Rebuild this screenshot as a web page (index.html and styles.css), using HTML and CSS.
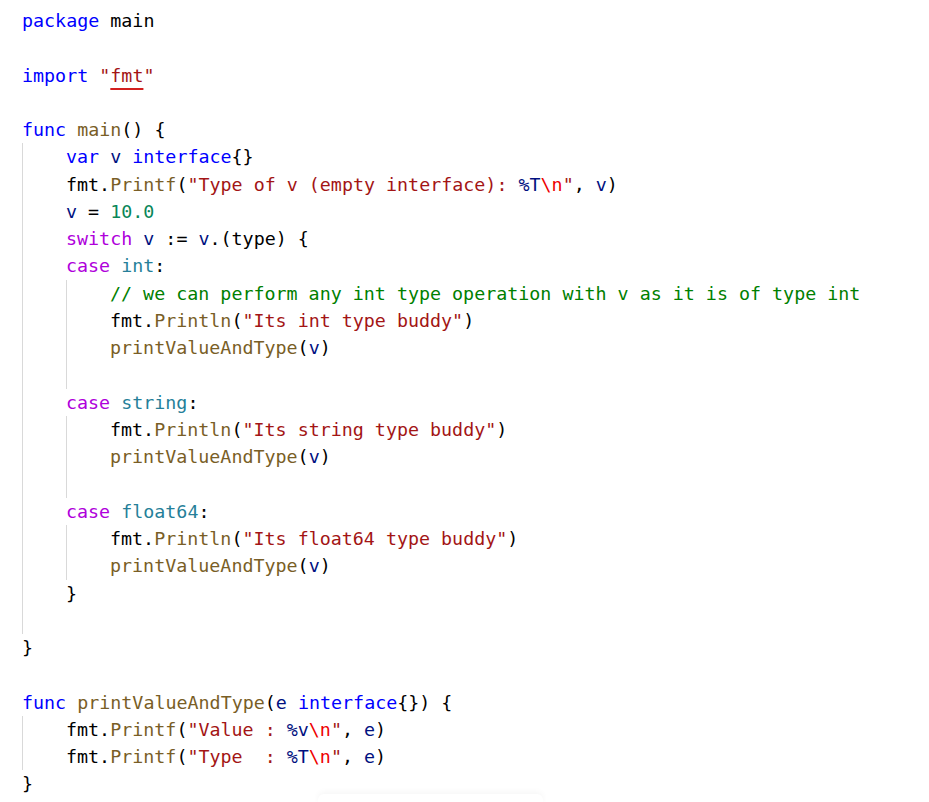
FILE: index.html
```html
<!DOCTYPE html>
<html>
<head>
<meta charset="utf-8">
<link rel="stylesheet" href="styles.css">
</head>
<body>
<div class="editor">
  <div class="ln"><span class="kw">package</span> main</div>
  <div class="ln"></div>
  <div class="ln"><span class="kw">import</span> <span class="str">"<span class="err">fmt</span>"</span></div>
  <div class="ln"></div>
  <div class="ln"><span class="kw">func</span> <span class="fn">main</span>() {</div>
  <div class="block">
    <div class="ln"><span class="kw">var</span> <span class="var">v</span> <span class="kw">interface</span>{}</div>
    <div class="ln"><span class="pkg">fmt</span>.<span class="fn">Printf</span>(<span class="str">"Type of v (empty interface): </span><span class="ph">%T</span><span class="esc">\n</span><span class="str">"</span>, <span class="var">v</span>)</div>
    <div class="ln"><span class="var">v</span> = <span class="num">10.0</span></div>
    <div class="ln"><span class="ctl">switch</span> <span class="var">v</span> := <span class="var">v</span>.(type) {</div>
    <div class="ln"><span class="ctl">case</span> <span class="ty">int</span>:</div>
    <div class="block">
      <div class="ln"><span class="cm">// we can perform any int type operation with v as it is of type int</span></div>
      <div class="ln"><span class="pkg">fmt</span>.<span class="fn">Println</span>(<span class="str">"Its int type buddy"</span>)</div>
      <div class="ln"><span class="fn">printValueAndType</span>(<span class="var">v</span>)</div>
      <div class="ln"></div>
    </div>
    <div class="ln"><span class="ctl">case</span> <span class="ty">string</span>:</div>
    <div class="block">
      <div class="ln"><span class="pkg">fmt</span>.<span class="fn">Println</span>(<span class="str">"Its string type buddy"</span>)</div>
      <div class="ln"><span class="fn">printValueAndType</span>(<span class="var">v</span>)</div>
      <div class="ln"></div>
    </div>
    <div class="ln"><span class="ctl">case</span> <span class="ty">float64</span>:</div>
    <div class="block">
      <div class="ln"><span class="pkg">fmt</span>.<span class="fn">Println</span>(<span class="str">"Its float64 type buddy"</span>)</div>
      <div class="ln"><span class="fn">printValueAndType</span>(<span class="var">v</span>)</div>
    </div>
    <div class="ln">}</div>
    <div class="ln"></div>
  </div>
  <div class="ln">}</div>
  <div class="ln"></div>
  <div class="ln"><span class="kw">func</span> <span class="fn">printValueAndType</span>(<span class="var">e</span> <span class="kw">interface</span>{}) {</div>
  <div class="block">
    <div class="ln"><span class="pkg">fmt</span>.<span class="fn">Printf</span>(<span class="str">"Value : </span><span class="ph">%v</span><span class="esc">\n</span><span class="str">"</span>, <span class="var">e</span>)</div>
    <div class="ln"><span class="pkg">fmt</span>.<span class="fn">Printf</span>(<span class="str">"Type  : </span><span class="ph">%T</span><span class="esc">\n</span><span class="str">"</span>, <span class="var">e</span>)</div>
  </div>
  <div class="ln">}</div>
</div>
<div class="shadow"></div>
</body>
</html>
```
FILE: styles.css
```css
html, body {
  margin: 0;
  padding: 0;
  background: #ffffff;
}

body {
  position: relative;
  width: 929px;
  height: 802px;
  overflow: hidden;
}

.editor {
  padding: 7px 0 0 22px;
  font-family: "DejaVu Sans Mono", "Liberation Mono", monospace;
  font-size: 18.33px;
  color: #000000;
}

.ln {
  height: 27.28px;
  line-height: 27.28px;
  white-space: pre;
}

.block {
  border-left: 1px solid #d9d9d9;
  padding-left: 43px;
}

.kw { color: #0000ff; }
.ctl { color: #af00db; }
.fn { color: #795e26; }
.str { color: #a31515; }
.esc { color: #ee0000; }
.ph { color: #001080; }
.num { color: #098658; }
.ty { color: #267f99; }
.var { color: #001080; }
.pkg { color: #000000; }
.cm { color: #008000; }

.err {
  text-decoration: underline;
  text-decoration-color: #d21f1f;
  text-decoration-thickness: 2px;
  text-underline-offset: 6px;
}

.shadow {
  position: absolute;
  left: 318px;
  top: 794px;
  width: 225px;
  height: 12px;
  border-radius: 6px;
  box-shadow: 0 -2px 6px rgba(0, 0, 0, 0.04);
  background: #ffffff;
}
```
